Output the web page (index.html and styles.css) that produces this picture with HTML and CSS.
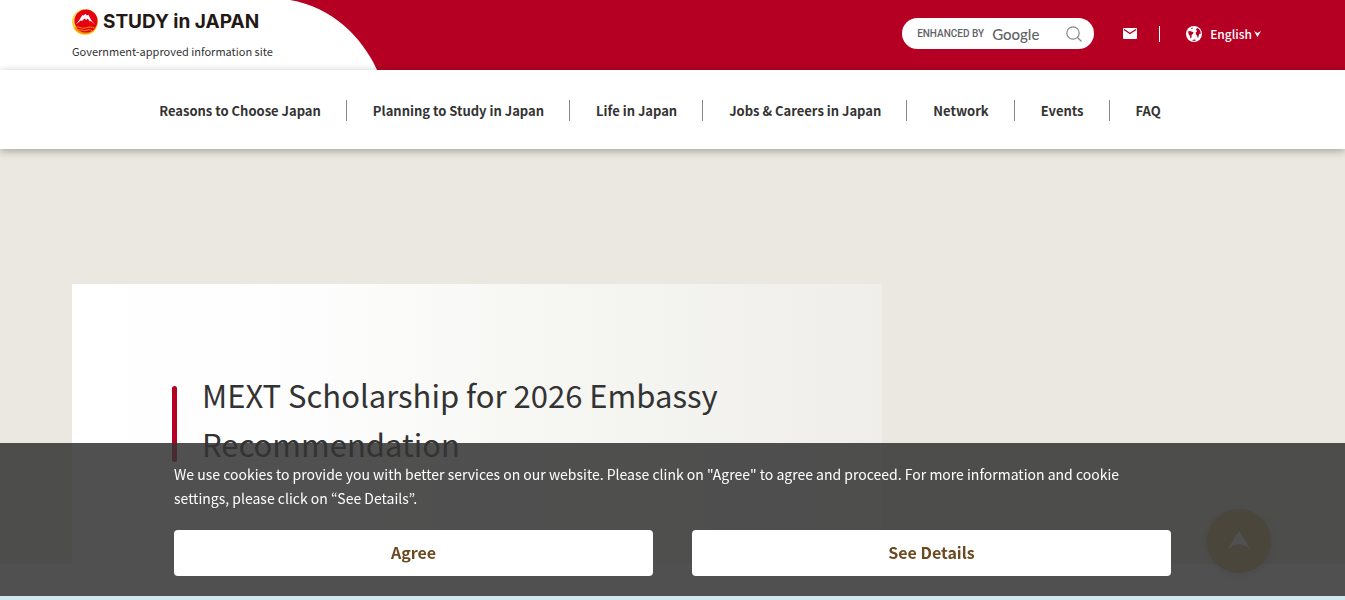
FILE: index.html
```html
<!DOCTYPE html>
<html lang="en">
<head>
    <meta charset="utf-8">
    <meta name="viewport" content="width=device-width, initial-scale=1">
    <title>Study in Japan</title>
    <link rel="stylesheet" href="styles.css">
</head>
<body>
    <header class="header">
        <div class="header-top">
            <div class="brand">
                <a href="#" class="logo">
                    <svg class="logo-mark" viewBox="0 0 26 26" aria-hidden="true">
                        <circle cx="13" cy="13" r="13" fill="#f9d648"/>
                        <path d="M2 19A13 13 0 0 0 24 19Z" fill="#f39800"/>
                        <circle cx="14" cy="12" r="11.500" fill="#e60012"/>
                        <path d="M3 16C7 12.500 8.500 8.500 10.500 6l1.300.6 1.500-1.800 1.500 1.600 1.700-.6C18 9 19.500 12.500 23.500 16l-4.700-4-1 .6-2.100-3.100-1.500 1.500-1.700-1.500-2.500 2.500-1.200-.6Z" fill="#fff"/>
                        <path d="M2.500 19c4-3 7 1.500 11 0s6-1 9 0M5 21.500c4-2 6 1 9 0s4-1 6 0" fill="none" stroke="#f39800" stroke-width="1"/>
                    </svg>
                    <span>STUDY in JAPAN</span>
                </a>
                <p class="tagline">Government-approved information site</p>
            </div>
            <svg class="brand-curve" viewBox="0 0 87 70" aria-hidden="true">
                <path d="M0 0C42 7 72 37 87 70H0Z" fill="#fff"/>
            </svg>
            <div class="tools">
                <form class="search">
                    <label for="q">ENHANCED BY <span>Google</span></label>
                    <input type="text" id="q" name="q">
                    <button type="submit" aria-label="Search">
                        <svg width="16" height="16" viewBox="0 0 16 16" fill="none" stroke="#888" stroke-width="1.200" aria-hidden="true">
                            <circle cx="7" cy="7" r="6.200"/>
                            <path d="M11.500 11.500L15.500 15.500"/>
                        </svg>
                    </button>
                </form>
                <a href="#" class="mail" aria-label="Contact">
                    <svg width="14" height="11" viewBox="0 0 14 11" aria-hidden="true">
                        <rect width="14" height="11" rx="1" fill="#fff"/>
                        <path d="M1 1.500L7 5.500L13 1.500" fill="none" stroke="#b50023" stroke-width="1.400"/>
                    </svg>
                </a>
                <button type="button" class="language">
                    <svg width="16" height="16" viewBox="0 0 16 16" aria-hidden="true">
                        <circle cx="8" cy="8" r="8" fill="#fff"/>
                        <path d="M2 5.500L4 5 7.500 6.200 6.800 8 5.500 9 5.700 10.500 5 12.500 4.300 12 4 10 2.800 8.500ZM10 3.500L11 2 13 3 14.500 5.500 14.800 8 13.700 7.500 12.700 9.500 12.300 11.500 11.500 11.500 11 9.500 10 8.500 9.700 6.500 11 5.200ZM5 2.200L7 1.500 6 3.500ZM6 14.300L8 13.500 10.500 14 8 15Z" fill="#b50023"/>
                    </svg>
                    <span>English</span>
                    <svg width="7" height="6" viewBox="0 0 7 6" aria-hidden="true">
                        <path d="M0 0L3.500 2 7 0 3.500 6Z" fill="#fff"/>
                    </svg>
                </button>
            </div>
        </div>
        <nav class="nav">
            <ul>
                <li><a href="#">Reasons to Choose Japan</a></li>
                <li><a href="#">Planning to Study in Japan</a></li>
                <li><a href="#">Life in Japan</a></li>
                <li><a href="#">Jobs &amp; Careers in Japan</a></li>
                <li><a href="#">Network</a></li>
                <li><a href="#">Events</a></li>
                <li><a href="#">FAQ</a></li>
            </ul>
        </nav>
    </header>

    <main class="hero">
        <div class="hero-inner">
            <div class="hero-card">
                <h1>MEXT Scholarship for 2026 Embassy Recommendation</h1>
            </div>
        </div>
    </main>

    <a href="#" class="page-top" aria-label="Back to top">
        <svg width="24" height="20" viewBox="0 0 24 20" aria-hidden="true">
            <path d="M12 0L24 19Q12 7 0 19Z" fill="#fff"/>
        </svg>
    </a>

    <div class="cookie">
        <div class="cookie-inner">
            <p>We use cookies to provide you with better services on our website. Please clink on "Agree" to agree and proceed. For more information and cookie settings, please click on “See Details”.</p>
            <div class="cookie-buttons">
                <button type="button">Agree</button>
                <button type="button">See Details</button>
            </div>
        </div>
    </div>
</body>
</html>
```
FILE: styles.css
```css
* {
    box-sizing: border-box;
}

body {
    margin: 0;
    font-family: "Noto Sans CJK JP", "Noto Sans", sans-serif;
    color: #333;
    background: #fff;
    overflow: hidden;
}

a {
    color: inherit;
    text-decoration: none;
}

button {
    font-family: inherit;
    border: 0;
    padding: 0;
    background: none;
    cursor: pointer;
}

svg {
    display: block;
}

/* header */
.header {
    position: relative;
}

.header-top {
    display: flex;
    height: 70px;
    background: #b50023;
}

.brand {
    width: 290px;
    padding: 8px 0 0 72px;
    background: #fff;
}

.logo {
    display: flex;
    align-items: center;
    gap: 5px;
    height: 27px;
    color: #231815;
    font-family: Inter, sans-serif;
    font-size: 19px;
    font-weight: 700;
    white-space: nowrap;
}

.logo-mark {
    width: 26px;
    height: 26px;
}

.tagline {
    margin: 8px 0 0;
    font-size: 11px;
    line-height: 16px;
    white-space: nowrap;
}

.brand-curve {
    width: 87px;
    height: 70px;
}

.tools {
    display: flex;
    align-items: center;
    height: 31px;
    margin: 18px 84px 0 auto;
}

.search {
    display: flex;
    align-items: center;
    width: 192px;
    height: 31px;
    padding: 0 12px 0 15px;
    border-radius: 16px;
    background: #fff;
}

.search label {
    display: flex;
    align-items: center;
    gap: 8px;
    color: #5f6368;
    font-family: Roboto, sans-serif;
    font-size: 10px;
    font-weight: 500;
    white-space: nowrap;
}

.search label span {
    font-family: Lato, sans-serif;
    font-size: 15px;
}

.search input {
    flex: 1;
    width: 0;
    min-width: 0;
    border: 0;
    padding: 0;
    background: none;
    outline: none;
}

.mail {
    padding: 0 22px 0 29px;
}

.language {
    display: flex;
    align-items: center;
    color: #fff;
    font-size: 12px;
    font-weight: 500;
}

.language::before {
    content: "";
    width: 1px;
    height: 16px;
    margin-right: 26px;
    background: #fff;
}

.language span {
    margin: 0 2px 0 8px;
}

.nav {
    position: relative;
    display: flex;
    justify-content: center;
    height: 79px;
    padding-top: 1px;
    background: #fff;
    box-shadow: 0 2px 8px rgba(0, 0, 0, 0.3);
}

.nav ul {
    display: flex;
    align-items: center;
    margin: 0;
    padding: 0;
    list-style: none;
}

.nav li {
    padding: 0 25px 0 26px;
    border-right: 1px solid #888;
    font-size: 13px;
    font-weight: 700;
    line-height: 21px;
    white-space: nowrap;
}

.nav li:first-child {
    padding-left: 0;
}

.nav li:last-child {
    border-right: 0;
}

/* hero */
.hero {
    height: 415px;
    padding-top: 135px;
    background: #ebe8e1;
}

.hero-inner {
    max-width: 1201px;
    margin: 0 auto;
}

.hero-card {
    display: flex;
    align-items: center;
    max-width: 810px;
    height: 280px;
    padding: 0 100px 10px;
    background: linear-gradient(to right, #fff, #fdfdfd 30%, #f6f6f2 60%, #efeeea);
}

.hero-card h1 {
    display: flex;
    margin: 0;
    font-size: 31px;
    font-weight: 400;
    line-height: 49px;
}

.hero-card h1::before {
    content: "";
    flex: none;
    width: 5px;
    margin: 16px 25px 6px 0;
    border-radius: 3px;
    background: #b50023;
}

.page-top {
    position: fixed;
    right: 74px;
    bottom: 27px;
    display: flex;
    align-items: center;
    justify-content: center;
    width: 64px;
    height: 64px;
    border-radius: 50%;
    background: #d4b468;
    box-shadow: 0 2px 8px rgba(0, 0, 0, 0.2);
}

/* cookie notice */
.cookie {
    position: fixed;
    left: 0;
    right: 0;
    bottom: 0;
    padding: 19px 20px 20px;
    border-bottom: 4px solid #cfe8ed;
    background: rgba(51, 51, 51, 0.86);
    background-clip: padding-box;
}

.cookie-inner {
    max-width: 997px;
    margin: 0 auto;
}

.cookie p {
    margin: 0 0 20px;
    color: #fff;
    font-size: 14px;
    font-weight: 400;
    line-height: 24px;
}

.cookie-buttons {
    display: flex;
    gap: 39px;
}

.cookie-buttons button {
    flex: 1;
    height: 46px;
    padding-bottom: 2px;
    border-radius: 4px;
    background: #fff;
    color: #6b4a21;
    font-size: 16px;
    font-weight: 700;
}
```
